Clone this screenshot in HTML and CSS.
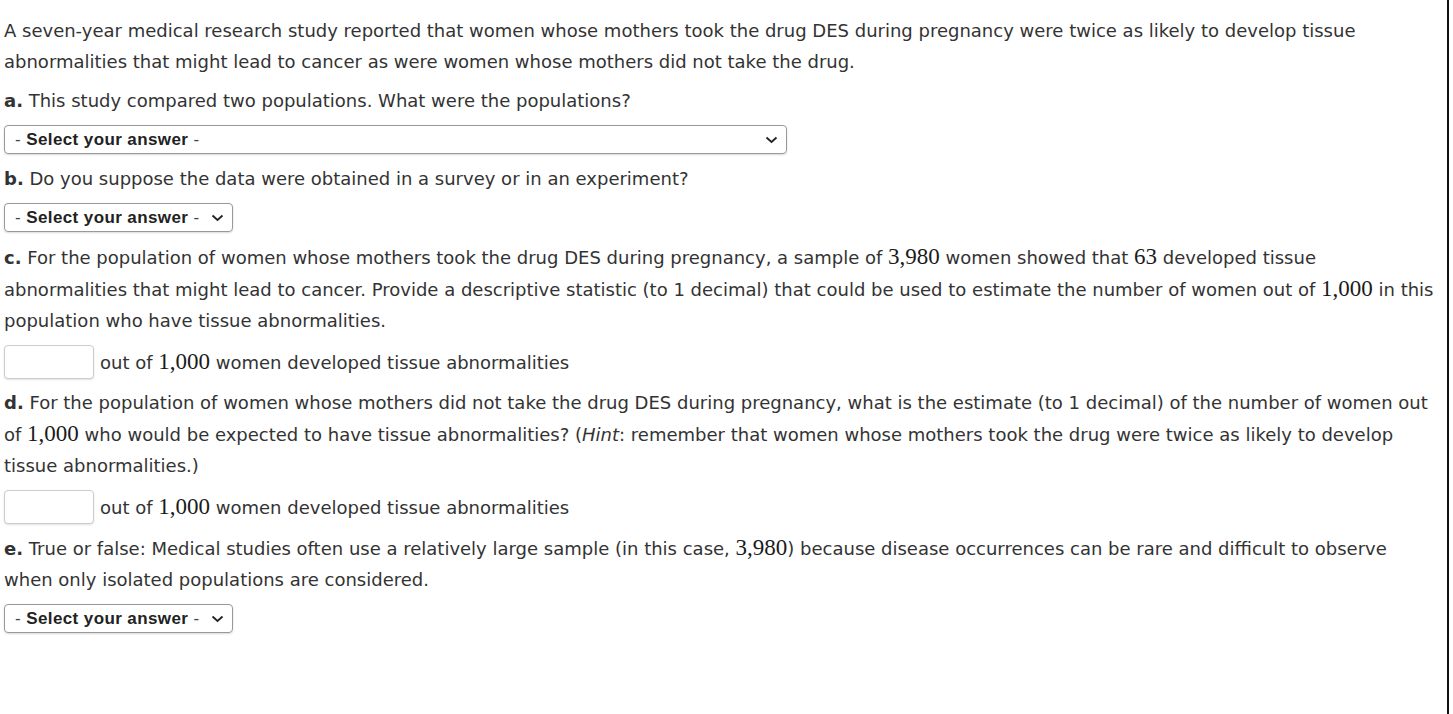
FILE: index.html
```html
<!DOCTYPE html>
<html>
<head>
<meta charset="utf-8">
<link rel="stylesheet" href="styles.css">
</head>
<body>
<div class="page">
  <div class="content">
    <p class="para">A seven-year medical research study reported that women whose mothers took the drug DES during pregnancy were twice as likely to develop tissue abnormalities that might lead to cancer as were women whose mothers did not take the drug.</p>

    <p class="q"><b>a.</b> This study compared two populations. What were the populations?</p>
    <div class="field">
      <div class="select wide"><span><span class="dash">-</span> Select your answer <span class="dash">-</span></span><svg class="chev" viewBox="0 0 12 8" width="13" height="8"><path d="M1 1.5 L6 6 L11 1.5" fill="none" stroke="#222" stroke-width="1.8"/></svg></div>
    </div>

    <p class="q"><b>b.</b> Do you suppose the data were obtained in a survey or in an experiment?</p>
    <div class="field">
      <div class="select"><span><span class="dash">-</span> Select your answer <span class="dash">-</span></span><svg class="chev" viewBox="0 0 12 8" width="13" height="8"><path d="M1 1.5 L6 6 L11 1.5" fill="none" stroke="#222" stroke-width="1.8"/></svg></div>
    </div>

    <p class="q"><b>c.</b> For the population of women whose mothers took the drug DES during pregnancy, a sample of <span class="m">3,980</span> women showed that <span class="m">63</span> developed tissue abnormalities that might lead to cancer. Provide a descriptive statistic (to 1 decimal) that could be used to estimate the number of women out of <span class="m">1,000</span> in this population who have tissue abnormalities.</p>
    <div class="field row">
      <div class="input"></div>
      <span>out of <span class="m">1,000</span> women developed tissue abnormalities</span>
    </div>

    <p class="q"><b>d.</b> For the population of women whose mothers did not take the drug DES during pregnancy, what is the estimate (to 1 decimal) of the number of women out of <span class="m">1,000</span> who would be expected to have tissue abnormalities? (<i>Hint</i>: remember that women whose mothers took the drug were twice as likely to develop tissue abnormalities.)</p>
    <div class="field row">
      <div class="input"></div>
      <span>out of <span class="m">1,000</span> women developed tissue abnormalities</span>
    </div>

    <p class="q"><b>e.</b> True or false: Medical studies often use a relatively large sample (in this case, <span class="m">3,980</span>) because disease occurrences can be rare and difficult to observe when only isolated populations are considered.</p>
    <div class="field">
      <div class="select"><span><span class="dash">-</span> Select your answer <span class="dash">-</span></span><svg class="chev" viewBox="0 0 12 8" width="13" height="8"><path d="M1 1.5 L6 6 L11 1.5" fill="none" stroke="#222" stroke-width="1.8"/></svg></div>
    </div>
  </div>
</div>
</body>
</html>
```

FILE: styles.css
```css
html, body {
  margin: 0;
  padding: 0;
  background: #fff;
}
.page {
  width: 1447px;
  height: 714px;
  border-right: 2px solid #111;
}
.content {
  padding: 15px 0 0 4px;
  width: 1437px;
  font-family: "DejaVu Sans", Verdana, sans-serif;
  font-size: 18px;
  line-height: 31px;
  color: #333;
}
p {
  margin: 0;
}
.para {
  margin-bottom: 8px;
}
.q b {
  font-weight: bold;
}
.m {
  font-family: "Liberation Serif", "Times New Roman", serif;
  font-size: 23px;
  color: #1a1a1a;
}
.field {
  margin: 9px 0 9px;
}
.row {
  display: flex;
  align-items: center;
  gap: 6px;
  margin-bottom: 8px;
}
.select {
  display: flex;
  align-items: center;
  justify-content: space-between;
  box-sizing: border-box;
  width: 229px;
  height: 29px;
  padding: 0 8px 0 10px;
  border: 1px solid #999;
  border-radius: 4px;
  box-shadow: 0 1px 2px rgba(0,0,0,0.15);
  font-family: "Liberation Sans", Arial, sans-serif;
  font-weight: bold;
  font-size: 17px;
  letter-spacing: 0.4px;
  color: #222;
  line-height: 1;
}
.dash {
  font-weight: normal;
  color: #444;
}
.select.wide {
  width: 783px;
}
.chev {
  display: block;
}
.input {
  box-sizing: border-box;
  width: 90px;
  height: 34px;
  border: 1px solid #ccc;
  border-radius: 4px;
  box-shadow: 0 1px 2px rgba(0,0,0,0.12);
  background: #fff;
}
```
